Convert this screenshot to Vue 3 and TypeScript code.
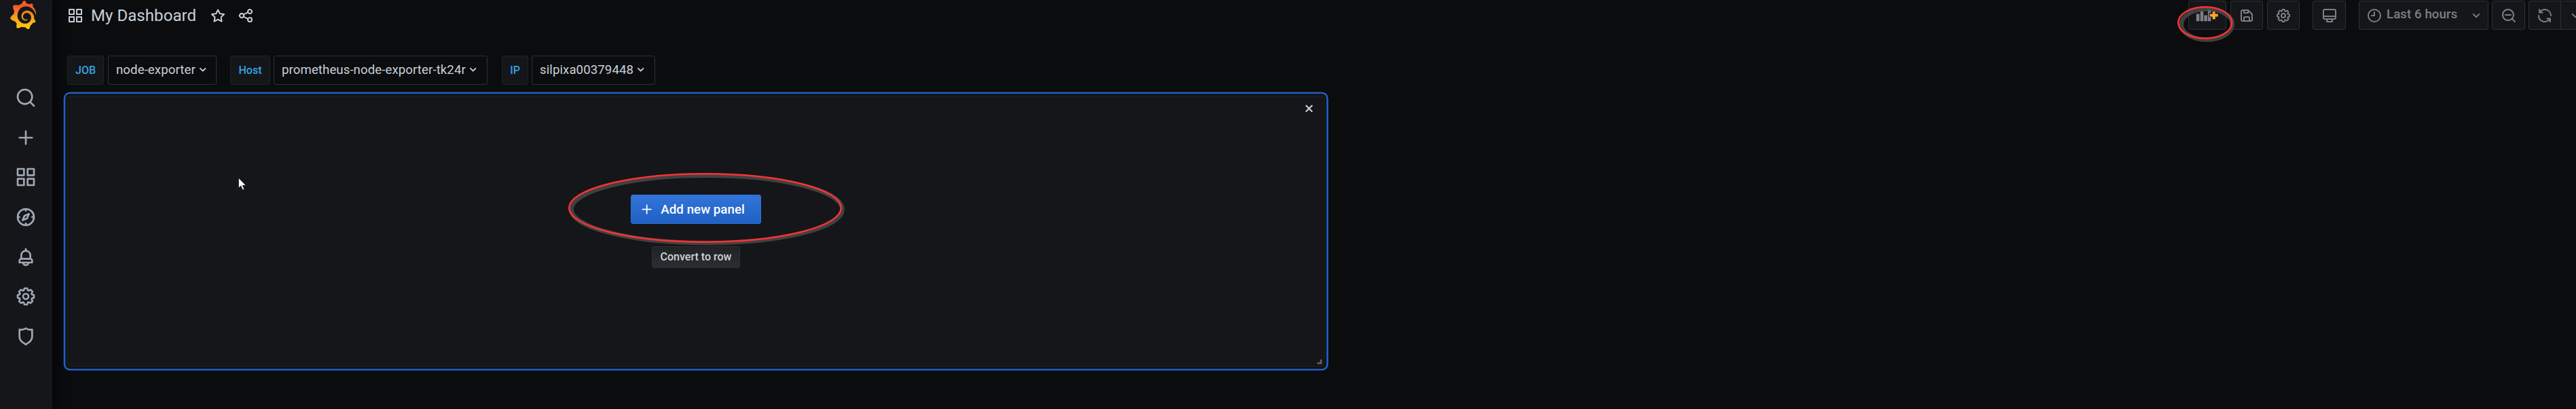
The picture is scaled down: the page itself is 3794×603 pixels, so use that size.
<script setup lang="ts">
import { ref } from 'vue'

interface Variable {
  key: string
  label: string
  value: string
}

const paths: Record<string, string> = {
  apps: 'M10,13H3a1,1,0,0,0-1,1v7a1,1,0,0,0,1,1h7a1,1,0,0,0,1-1V14A1,1,0,0,0,10,13ZM9,20H4V15H9ZM21,2H14a1,1,0,0,0-1,1v7a1,1,0,0,0,1,1h7a1,1,0,0,0,1-1V3A1,1,0,0,0,21,2ZM20,9H15V4h5Zm1,4H14a1,1,0,0,0-1,1v7a1,1,0,0,0,1,1h7a1,1,0,0,0,1-1V14A1,1,0,0,0,21,13Zm-1,7H15V15h5ZM10,2H3A1,1,0,0,0,2,3v7a1,1,0,0,0,1,1h7a1,1,0,0,0,1-1V3A1,1,0,0,0,10,2ZM9,9H4V4H9Z',
  search: 'M21.71,20.29,18,16.61A9,9,0,1,0,16.61,18l3.68,3.68a1,1,0,0,0,1.42,0A1,1,0,0,0,21.71,20.29ZM11,18a7,7,0,1,1,7-7A7,7,0,0,1,11,18Z',
  plus: 'M19,11H13V5a1,1,0,0,0-2,0v6H5a1,1,0,0,0,0,2h6v6a1,1,0,0,0,2,0V13h6a1,1,0,0,0,0-2Z',
  compass: 'M12,2A10,10,0,1,0,22,12,10,10,0,0,0,12,2Zm1,17.93V19a1,1,0,0,0-2,0v.93A8,8,0,0,1,4.07,13H5a1,1,0,0,0,0-2H4.07A8,8,0,0,1,11,4.07V5a1,1,0,0,0,2,0V4.07A8,8,0,0,1,19.93,11H19a1,1,0,0,0,0,2h.93A8,8,0,0,1,13,19.93ZM15.14,7.55l-5,2.12a1,1,0,0,0-.52.52l-2.12,5a1,1,0,0,0,.21,1.1,1,1,0,0,0,.7.29.93.93,0,0,0,.4-.08l5-2.12a1,1,0,0,0,.52-.52l2.12-5a1,1,0,0,0-1.31-1.31Zm-2.49,5.1-2.28,1,1-2.28,2.28-1Z',
  bell: 'M18,13.18V10a6,6,0,0,0-5-5.91V3a1,1,0,0,0-2,0V4.09A6,6,0,0,0,6,10v3.18A3,3,0,0,0,4,16v2a1,1,0,0,0,1,1H8.14a4,4,0,0,0,7.72,0H19a1,1,0,0,0,1-1V16A3,3,0,0,0,18,13.18ZM8,10a4,4,0,0,1,8,0v3H8Zm4,10a2,2,0,0,1-1.72-1h3.44A2,2,0,0,1,12,20Zm6-3H6V16a1,1,0,0,1,1-1H17a1,1,0,0,1,1,1Z',
  cog: 'M21.32,9.55l-1.89-.63.89-1.78A1,1,0,0,0,20.13,6L18,3.87a1,1,0,0,0-1.15-.19l-1.78.89-.63-1.89A1,1,0,0,0,13.5,2h-3a1,1,0,0,0-.95.68L8.92,4.57,7.14,3.68A1,1,0,0,0,6,3.87L3.87,6a1,1,0,0,0-.19,1.15l.89,1.78-1.89.63A1,1,0,0,0,2,10.5v3a1,1,0,0,0,.68.95l1.89.63-.89,1.78A1,1,0,0,0,3.87,18L6,20.13a1,1,0,0,0,1.15.19l1.78-.89.63,1.89a1,1,0,0,0,.95.68h3a1,1,0,0,0,.95-.68l.63-1.89,1.78.89A1,1,0,0,0,18,20.13L20.13,18a1,1,0,0,0,.19-1.15l-.89-1.78,1.89-.63A1,1,0,0,0,22,13.5v-3A1,1,0,0,0,21.32,9.55ZM20,12.78l-1.2.4A2,2,0,0,0,17.64,16l.57,1.14-1.1,1.1L16,17.64a2,2,0,0,0-2.79,1.16l-.4,1.2H11.22l-.4-1.2A2,2,0,0,0,8,17.64l-1.14.57-1.1-1.1L6.36,16A2,2,0,0,0,5.2,13.18L4,12.78V11.22l1.2-.4A2,2,0,0,0,6.36,8L5.79,6.89l1.1-1.1L8,6.36A2,2,0,0,0,10.82,5.2l.4-1.2h1.56l.4,1.2A2,2,0,0,0,16,6.36l1.14-.57,1.1,1.1L17.64,8a2,2,0,0,0,1.16,2.79l1.2.4ZM12,8a4,4,0,1,0,4,4A4,4,0,0,0,12,8Zm0,6a2,2,0,1,1,2-2A2,2,0,0,1,12,14Z',
  shield: 'M19.63,3.65a1,1,0,0,0-.84-.2,8,8,0,0,1-6.22-1.27,1,1,0,0,0-1.14,0A8,8,0,0,1,5.21,3.45a1,1,0,0,0-.84.2A1,1,0,0,0,4,4.43v7.45a9,9,0,0,0,3.77,7.33l3.65,2.6a1,1,0,0,0,1.16,0l3.65-2.6A9,9,0,0,0,20,11.88V4.43A1,1,0,0,0,19.63,3.65ZM18,11.88a7,7,0,0,1-2.93,5.7L12,19.77,8.93,17.58A7,7,0,0,1,6,11.88V5.58a10,10,0,0,0,6-1.39,10,10,0,0,0,6,1.39Z',
  star: 'M22,9.67A1,1,0,0,0,21.14,9l-5.69-.83L12.9,3a1,1,0,0,0-1.8,0L8.55,8.16,2.86,9a1,1,0,0,0-.81.68,1,1,0,0,0,.25,1l4.13,4-1,5.68A1,1,0,0,0,6.9,21.44L12,18.77l5.1,2.67a.93.93,0,0,0,.46.12,1,1,0,0,0,.59-.19,1,1,0,0,0,.4-1l-1-5.68,4.13-4A1,1,0,0,0,22,9.67Zm-6.15,4a1,1,0,0,0-.29.88l.72,4.2-3.76-2a1.06,1.06,0,0,0-.94,0l-3.76,2,.72-4.2a1,1,0,0,0-.29-.88l-3-3,4.21-.61a1,1,0,0,0,.76-.55L12,5.7l1.88,3.82a1,1,0,0,0,.76.55l4.21.61Z',
  share: 'M18,14a4,4,0,0,0-3.08,1.48l-5.1-2.35a3.64,3.64,0,0,0,0-2.26l5.1-2.35A4,4,0,1,0,14,6a4.17,4.17,0,0,0,.07.71L8.79,9.14a4,4,0,1,0,0,5.72l5.28,2.43A4.17,4.17,0,0,0,14,18a4,4,0,1,0,4-4ZM18,4a2,2,0,1,1-2,2A2,2,0,0,1,18,4ZM6,14a2,2,0,1,1,2-2A2,2,0,0,1,6,14Zm12,6a2,2,0,1,1,2-2A2,2,0,0,1,18,20Z',
  angle: 'M17,9.17a1,1,0,0,0-1.41,0L12,12.71,8.46,9.17a1,1,0,0,0-1.41,0,1,1,0,0,0,0,1.42l4.24,4.24a1,1,0,0,0,1.42,0L17,10.59A1,1,0,0,0,17,9.17Z',
  save: 'M20.71,9.29l-6-6a1,1,0,0,0-.32-.21A1.09,1.09,0,0,0,14,3H6A3,3,0,0,0,3,6V18a3,3,0,0,0,3,3H18a3,3,0,0,0,3-3V10A1,1,0,0,0,20.71,9.29ZM9,5h4V7H9Zm6,14H9V16a1,1,0,0,1,1-1h4a1,1,0,0,1,1,1Zm4-1a1,1,0,0,1-1,1H17V16a3,3,0,0,0-3-3H10a3,3,0,0,0-3,3v3H6a1,1,0,0,1-1-1V6A1,1,0,0,1,6,5H7V8A1,1,0,0,0,8,9h6a1,1,0,0,0,1-1V6.41l4,4Z',
  monitor: 'M19,2H5A3,3,0,0,0,2,5V15a3,3,0,0,0,3,3H7.64l-.58,1a2,2,0,0,0,0,2,2,2,0,0,0,1.75,1h6.46A2,2,0,0,0,17,21a2,2,0,0,0,0-2l-.59-1H19a3,3,0,0,0,3-3V5A3,3,0,0,0,19,2ZM8.77,20,10,18H14l1.2,2ZM20,15a1,1,0,0,1-1,1H5a1,1,0,0,1-1-1V14H20Zm0-3H4V5A1,1,0,0,1,5,4H19a1,1,0,0,1,1,1Z',
  clock: 'M12,2A10,10,0,1,0,22,12,10,10,0,0,0,12,2Zm0,18a8,8,0,1,1,8-8A8,8,0,0,1,12,20ZM12,6a1,1,0,0,0-1,1v4H8a1,1,0,0,0,0,2h4a1,1,0,0,0,1-1V7A1,1,0,0,0,12,6Z',
  zoomOut: 'M21.71,20.29,18,16.61A9,9,0,1,0,16.61,18l3.68,3.68a1,1,0,0,0,1.42,0A1,1,0,0,0,21.71,20.29ZM11,18a7,7,0,1,1,7-7A7,7,0,0,1,11,18Zm4-8H7a1,1,0,0,0,0,2h8a1,1,0,0,0,0-2Z',
  sync: 'M19.91,15.51H15.38a1,1,0,0,0,0,2h2.4A8,8,0,0,1,4,12a1,1,0,0,0-2,0,10,10,0,0,0,16.88,7.23V21a1,1,0,0,0,2,0V16.5A1,1,0,0,0,19.91,15.51ZM12,2A10,10,0,0,0,5.12,4.77V3a1,1,0,0,0-2,0V7.5a1,1,0,0,0,1,1h4.5a1,1,0,0,0,0-2H6.22A8,8,0,0,1,20,12a1,1,0,0,0,2,0A10,10,0,0,0,12,2Z',
}

const logoPath =
  'M342,161.2c-0.6-6.1-1.6-13.1-3.6-20.9c-2-7.7-5-16.2-9.4-25c-4.4-8.8-10.1-17.9-17.5-26.8c-2.9-3.5-6.1-6.9-9.5-10.2c5.1-20.3-6.2-37.9-6.2-37.9c-19.5-1.2-31.9,6.1-36.5,9.4c-0.8-0.3-1.5-0.7-2.3-1c-3.3-1.3-6.7-2.6-10.3-3.7c-3.5-1.1-7.1-2.1-10.8-3c-3.7-0.9-7.4-1.6-11.2-2.2c-0.7-0.1-1.3-0.2-2-0.3c-8.5-27.2-32.9-38.6-32.9-38.6c-27.3,17.3-32.4,41.5-32.4,41.5s-0.1,0.5-0.3,1.4c-1.5,0.4-3,0.9-4.5,1.3c-2.1,0.6-4.2,1.4-6.2,2.2c-2.1,0.8-4.1,1.6-6.2,2.5c-4.1,1.8-8.2,3.8-12.2,6c-3.9,2.2-7.7,4.6-11.4,7.1c-0.5-0.2-1-0.4-1-0.4c-37.8-14.4-71.3,2.9-71.3,2.9c-3.1,40.2,15.1,65.5,18.7,70.1c-0.9,2.5-1.7,5-2.5,7.5c-2.8,9.1-4.9,18.4-6.2,28.1c-0.2,1.4-0.4,2.8-0.5,4.2C18.8,192.7,8.5,228,8.5,228c29.1,33.5,63.1,35.6,63.1,35.6c0,0,0.1-0.1,0.1-0.1c4.3,7.7,9.3,15,14.9,21.9c2.4,2.9,4.8,5.6,7.4,8.3c-10.6,30.4,1.5,55.6,1.5,55.6c32.4,1.2,53.7-14.2,58.2-17.7c3.2,1.1,6.5,2.1,9.8,2.9c10,2.6,20.2,4.1,30.4,4.5c2.5,0.1,5.1,0.2,7.6,0.1l1.2,0l0.8,0l1.6,0l1.6-0.1l0,0.1c15.3,21.8,42.1,24.9,42.1,24.9c19.1-20.1,20.2-40.1,20.2-44.4l0,0c0,0,0-0.1,0-0.3c0-0.4,0-0.6,0-0.6l0,0c0-0.3,0-0.6,0-0.9c4-2.8,7.8-5.8,11.4-9.1c7.6-6.9,14.3-14.8,19.9-23.3c0.5-0.8,1-1.6,1.5-2.4c21.6,1.2,36.9-13.4,36.9-13.4c-3.6-22.5-16.4-33.5-19.1-35.6l0,0c0,0-0.1-0.1-0.3-0.2c-0.2-0.1-0.2-0.2-0.2-0.2c0,0,0,0,0,0c-0.1-0.1-0.3-0.2-0.5-0.3c0.1-1.4,0.2-2.7,0.3-4.1c0.2-2.4,0.2-4.9,0.2-7.3l0-1.8l0-0.9l0-0.5c0-0.6,0-0.4,0-0.6l-0.1-1.5l-0.1-2c0-0.7-0.1-1.3-0.2-1.9c-0.1-0.6-0.1-1.3-0.2-1.9l-0.2-1.9l-0.3-1.9c-0.4-2.5-0.8-4.9-1.4-7.4c-2.3-9.7-6.1-18.9-11-27.2c-5-8.3-11.2-15.6-18.3-21.8c-7-6.2-14.9-11.2-23.1-14.9c-8.3-3.7-16.9-6.1-25.5-7.2c-4.3-0.6-8.6-0.8-12.9-0.7l-1.6,0l-0.4,0c-0.1,0-0.6,0-0.5,0l-0.7,0l-1.6,0.1c-0.6,0-1.2,0.1-1.7,0.1c-2.2,0.2-4.4,0.5-6.5,0.9c-8.6,1.6-16.7,4.7-23.8,9c-7.1,4.3-13.3,9.6-18.3,15.6c-5,6-8.9,12.7-11.6,19.6c-2.7,6.9-4.2,14.1-4.6,21c-0.1,1.7-0.1,3.5-0.1,5.2c0,0.4,0,0.9,0,1.3l0.1,1.4c0.1,0.8,0.1,1.7,0.2,2.5c0.3,3.5,1,6.9,1.9,10.1c1.9,6.5,4.9,12.4,8.6,17.4c3.7,5,8.2,9.1,12.9,12.4c4.7,3.2,9.8,5.5,14.8,7c5,1.5,10,2.1,14.7,2.1c0.6,0,1.2,0,1.7,0c0.3,0,0.6,0,0.9,0c0.3,0,0.6,0,0.9-0.1c0.5,0,1-0.1,1.5-0.1c0.1,0,0.3,0,0.4-0.1l0.5-0.1c0.3,0,0.6-0.1,0.9-0.1c0.6-0.1,1.1-0.2,1.7-0.3c0.6-0.1,1.1-0.2,1.6-0.4c1.1-0.2,2.1-0.6,3.1-0.9c2-0.7,4-1.5,5.7-2.4c1.8-0.9,3.4-2,5-3c0.4-0.3,0.9-0.6,1.3-1c1.6-1.3,1.9-3.7,0.6-5.3c-1.1-1.4-3.1-1.8-4.7-0.9c-0.4,0.2-0.8,0.4-1.2,0.6c-1.4,0.7-2.8,1.3-4.3,1.8c-1.5,0.5-3.1,0.9-4.7,1.2c-0.8,0.1-1.6,0.2-2.5,0.3c-0.4,0-0.8,0.1-1.3,0.1c-0.4,0-0.9,0-1.2,0c-0.4,0-0.8,0-1.2,0c-0.5,0-1,0-1.5-0.1c0,0-0.3,0-0.1,0l-0.2,0l-0.3,0c-0.2,0-0.5,0-0.7-0.1c-0.5-0.1-0.9-0.1-1.4-0.2c-3.7-0.5-7.4-1.6-10.9-3.2c-3.6-1.6-7-3.8-10.1-6.6c-3.1-2.8-5.8-6.1-7.9-9.9c-2.1-3.8-3.6-8-4.3-12.4c-0.3-2.2-0.5-4.5-0.4-6.7c0-0.6,0.1-1.2,0.1-1.8c0,0.2,0-0.1,0-0.1l0-0.2l0-0.5c0-0.3,0.1-0.6,0.1-0.9c0.1-1.2,0.3-2.4,0.5-3.6c1.7-9.6,6.5-19,13.9-26.1c1.9-1.8,3.9-3.4,6-4.9c2.1-1.5,4.4-2.8,6.8-3.9c2.4-1.1,4.8-2,7.4-2.7c2.5-0.7,5.1-1.1,7.8-1.4c1.3-0.1,2.6-0.2,4-0.2c0.4,0,0.6,0,0.9,0l1.1,0l0.7,0c0.3,0,0,0,0.1,0l0.3,0l1.1,0.1c2.9,0.2,5.7,0.6,8.5,1.3c5.6,1.2,11.1,3.3,16.2,6.1c10.2,5.7,18.9,14.5,24.2,25.1c2.7,5.3,4.6,11,5.5,16.9c0.2,1.5,0.4,3,0.5,4.5l0.1,1.1l0.1,1.1c0,0.4,0,0.8,0,1.1c0,0.4,0,0.8,0,1.1l0,1l0,1.1c0,0.7-0.1,1.9-0.1,2.6c-0.1,1.6-0.3,3.3-0.5,4.9c-0.2,1.6-0.5,3.2-0.8,4.8c-0.3,1.6-0.7,3.2-1.1,4.7c-0.8,3.1-1.8,6.2-3,9.3c-2.4,6-5.6,11.8-9.4,17.1c-7.7,10.6-18.2,19.2-30.2,24.7c-6,2.7-12.3,4.7-18.8,5.7c-3.2,0.6-6.5,0.9-9.8,1l-0.6,0l-0.5,0l-1.1,0l-1.6,0l-0.8,0c0.4,0-0.1,0-0.1,0l-0.3,0c-1.8,0-3.5-0.1-5.3-0.3c-7-0.5-13.9-1.8-20.7-3.7c-6.7-1.9-13.2-4.6-19.4-7.8c-12.3-6.6-23.4-15.6-32-26.5c-4.3-5.4-8.1-11.3-11.2-17.4c-3.1-6.1-5.6-12.6-7.4-19.1c-1.8-6.6-2.9-13.3-3.4-20.1l-0.1-1.3l0-0.3l0-0.3l0-0.6l0-1.1l0-0.3l0-0.4l0-0.8l0-1.6l0-0.3c0,0,0,0.1,0-0.1l0-0.6c0-0.8,0-1.7,0-2.5c0.1-3.3,0.4-6.8,0.8-10.2c0.4-3.4,1-6.9,1.7-10.3c0.7-3.4,1.5-6.8,2.5-10.2c1.9-6.7,4.3-13.2,7.1-19.3c5.7-12.2,13.1-23.1,22-31.8c2.2-2.2,4.5-4.2,6.9-6.2c2.4-1.9,4.9-3.7,7.5-5.4c2.5-1.7,5.2-3.2,7.9-4.6c1.3-0.7,2.7-1.4,4.1-2c0.7-0.3,1.4-0.6,2.1-0.9c0.7-0.3,1.4-0.6,2.1-0.9c2.8-1.2,5.7-2.2,8.7-3.1c0.7-0.2,1.5-0.4,2.2-0.7c0.7-0.2,1.5-0.4,2.2-0.6c1.5-0.4,3-0.8,4.5-1.1c0.7-0.2,1.5-0.3,2.3-0.5c0.8-0.2,1.5-0.3,2.3-0.5c0.8-0.1,1.5-0.3,2.3-0.4l1.1-0.2l1.2-0.2c0.8-0.1,1.5-0.2,2.3-0.3c0.9-0.1,1.7-0.2,2.6-0.3c0.7-0.1,1.9-0.2,2.6-0.3c0.5-0.1,1.1-0.1,1.6-0.2l1.1-0.1l0.5-0.1l0.6,0c0.9-0.1,1.7-0.1,2.6-0.2l1.3-0.1c0,0,0.5,0,0.1,0l0.3,0l0.6,0c0.7,0,1.5-0.1,2.2-0.1c2.9-0.1,5.9-0.1,8.8,0c5.8,0.2,11.5,0.9,17,1.9c11.1,2.1,21.5,5.6,31,10.3c9.5,4.6,17.9,10.3,25.3,16.5c0.5,0.4,0.9,0.8,1.4,1.2c0.4,0.4,0.9,0.8,1.3,1.2c0.9,0.8,1.7,1.6,2.6,2.4c0.9,0.8,1.7,1.6,2.5,2.4c0.8,0.8,1.6,1.6,2.4,2.5c3.1,3.3,6,6.6,8.6,10c5.2,6.7,9.4,13.5,12.7,19.9c0.2,0.4,0.4,0.8,0.6,1.2c0.2,0.4,0.4,0.8,0.6,1.2c0.4,0.8,0.8,1.6,1.1,2.4c0.4,0.8,0.7,1.5,1.1,2.3c0.3,0.8,0.7,1.5,1,2.3c1.2,3,2.4,5.9,3.3,8.6c1.5,4.4,2.6,8.3,3.5,11.7c0.3,1.4,1.6,2.3,3,2.1c1.5-0.1,2.6-1.3,2.6-2.8C342.6,170.4,342.5,166.1,342,161.2z'

const navItems = ['search', 'plus', 'apps', 'compass', 'bell', 'cog', 'shield']

const variables = ref<Variable[]>([
  { key: 'job', label: 'JOB', value: 'node-exporter' },
  { key: 'host', label: 'Host', value: 'prometheus-node-exporter-tk24r' },
  { key: 'ip', label: 'IP', value: 'silpixa00379448' },
])
</script>

<template>
  <div class="app">
    <nav class="sidebar">
      <svg class="logo" viewBox="8 4 335 358" preserveAspectRatio="none">
        <defs>
          <linearGradient id="logo-fill" x1="0" y1="1" x2="0" y2="0">
            <stop offset="0" stop-color="#fcd00c" />
            <stop offset="0.15" stop-color="#fcc010" />
            <stop offset="0.5" stop-color="#f7901e" />
            <stop offset="0.8" stop-color="#f05a28" />
            <stop offset="1" stop-color="#f05a28" />
          </linearGradient>
        </defs>
        <path :d="logoPath" fill="url(#logo-fill)" />
      </svg>
      <div class="nav">
        <svg v-for="name in navItems" :key="name" class="icon nav-icon" viewBox="0 0 24 24">
          <path :d="paths[name]" />
        </svg>
      </div>
    </nav>

    <main class="main">
      <header class="header">
        <div class="title-group">
          <svg class="icon" viewBox="0 0 24 24"><path :d="paths.apps" /></svg>
          <h1 class="title">My Dashboard</h1>
          <svg class="icon star" viewBox="0 0 24 24"><path :d="paths.star" /></svg>
          <svg class="icon share" viewBox="0 0 24 24"><path :d="paths.share" /></svg>
        </div>

        <div class="toolbar">
          <button class="tool add">
            <svg class="add-icon" viewBox="0 0 34 20">
              <defs>
                <linearGradient id="add-fill" x1="0" y1="0" x2="0" y2="1">
                  <stop offset="0" stop-color="#f5892b" />
                  <stop offset="1" stop-color="#fbc02c" />
                </linearGradient>
              </defs>
              <path class="bars" d="M0.700 7.500h4.700v10.700H0.700zM6.700 3.500h4.500v14.700H6.700zM12.300 9.500h4.500v8.700h-4.500zM17.800 0.800h4.500v5.200h-2.700v6.600h2.700v5.600h-4.500z" />
              <path d="M24.700 3.500h4v4h4v4h-4v3.800h-4v-3.800h-4v-4h4z" fill="url(#add-fill)" />
            </svg>
          </button>
          <button class="tool save"><svg class="icon" viewBox="0 0 24 24"><path :d="paths.save" /></svg></button>
          <button class="tool settings"><svg class="icon" viewBox="0 0 24 24"><path :d="paths.cog" /></svg></button>
          <button class="tool monitor"><svg class="icon" viewBox="0 0 24 24"><path :d="paths.monitor" /></svg></button>
          <button class="tool range">
            <svg class="icon" viewBox="0 0 24 24"><path :d="paths.clock" /></svg>
            <span class="range-text">Last 6 hours</span>
            <svg class="icon" viewBox="0 0 24 24"><path :d="paths.angle" /></svg>
          </button>
          <button class="tool zoom"><svg class="icon" viewBox="0 0 24 24"><path :d="paths.zoomOut" /></svg></button>
          <button class="tool refresh"><svg class="icon" viewBox="0 0 24 24"><path :d="paths.sync" /></svg></button>
          <button class="tool interval"><svg class="icon" viewBox="0 0 24 24"><path :d="paths.angle" /></svg></button>
        </div>
      </header>

      <section class="variables">
        <div v-for="v in variables" :key="v.key" class="variable" :class="v.key">
          <span class="var-label">{{ v.label }}</span>
          <span class="var-value">
            <span>{{ v.value }}</span>
            <svg class="icon small" viewBox="0 0 24 24"><path :d="paths.angle" /></svg>
          </span>
        </div>
      </section>

      <section class="panel">
        <svg class="close" viewBox="0 0 12 12"><path d="M1.200 1.200l9.600 9.600M10.800 1.200l-9.600 9.600" /></svg>
        <button class="add-panel">
          <svg class="icon small" viewBox="0 0 24 24"><path :d="paths.plus" /></svg>
          <span>Add new panel</span>
        </button>
        <button class="convert">Convert to row</button>
        <svg class="resize" viewBox="0 0 7 7"><path d="M4 0h3v7H0V4h4z" /></svg>
      </section>
    </main>

    <svg class="mark mark-panel" viewBox="0 0 420 120">
      <ellipse class="mark-shadow" cx="211" cy="58.500" rx="199.500" ry="49.700" />
      <ellipse class="mark-line" cx="208.500" cy="56.500" rx="200.300" ry="50.200" />
    </svg>
    <svg class="mark mark-tool" viewBox="0 0 100 70">
      <ellipse class="mark-shadow" cx="50.300" cy="35.900" rx="37.500" ry="22.600" />
      <ellipse class="mark-line" cx="47.700" cy="33.400" rx="39.500" ry="23.200" />
    </svg>
    <svg class="pointer" viewBox="0 0 12 19">
      <path d="M0.500 0.500V15l3.300-3.100L6.400 18l2.300-1L6.200 11.200H11z" />
    </svg>
  </div>
</template>

<style>
body {
  background: #0b0c0e;
  overflow: hidden;
}
</style>

<style scoped>
.app {
  position: relative;
  display: flex;
  width: 3794px;
  height: 603px;
  overflow: hidden;
  background: #0b0c0e;
  color: #c7d0d9;
  font-family: Roboto, 'Liberation Sans', sans-serif;
  font-size: 18.667px;
}

.icon {
  display: block;
  flex: none;
  width: 24px;
  height: 24px;
  fill: currentColor;
}

.icon.small {
  width: 21.333px;
  height: 21.333px;
}

.sidebar {
  flex: none;
  width: 77px;
  background: #151619;
  box-shadow: 0 0 26px #000;
}

.logo {
  display: block;
  width: 38px;
  height: 42px;
  margin: 1px 0 0 15px;
}

.nav {
  display: flex;
  flex-direction: column;
  align-items: center;
  gap: 26.667px;
  margin-top: 85px;
  padding-right: 1px;
  color: #9fa7b3;
}

.nav-icon {
  width: 32px;
  height: 32px;
}

.main {
  flex: 1;
  min-width: 0;
  padding-left: 22px;
}

.header {
  display: flex;
  justify-content: space-between;
  height: 82px;
}

.title-group {
  display: flex;
  align-items: center;
  height: 46px;
}

.title {
  width: 175px;
  margin: 0 0 0 11px;
  font-size: 24px;
  font-weight: 400;
  line-height: 32px;
  letter-spacing: 0.06px;
  white-space: nowrap;
}

.share {
  margin-left: 16.500px;
}

.toolbar {
  display: flex;
  align-items: flex-start;
  flex: none;
  width: 571px;
  padding-top: 1px;
  overflow: hidden;
}

.tool {
  display: flex;
  align-items: center;
  justify-content: center;
  flex: none;
  box-sizing: border-box;
  width: 48px;
  height: 43px;
  margin: 0;
  padding: 0;
  border: 1px solid #2c2f33;
  border-radius: 3px;
  background: #151619;
  color: #7b8087;
  font: inherit;
}

.add {
  width: 56px;
  margin-right: 6px;
}

.add-icon {
  width: 34px;
  height: 20px;
  margin-left: 0.600px;
}

.bars {
  fill: #7b8087;
}

.save {
  margin-right: 6px;
}

.settings {
  margin-right: 19px;
}

.monitor {
  width: 49px;
  margin-right: 19px;
}

.range {
  justify-content: flex-start;
  width: 191px;
  margin-right: 5px;
  padding-left: 10px;
}

.range-text {
  width: 119.500px;
  margin: -4px 0 0 6px;
  font-weight: 500;
  letter-spacing: 0.08px;
  text-align: left;
  white-space: nowrap;
}

.zoom {
  width: 49px;
  margin-right: 5px;
}

.refresh {
  border-radius: 3px 0 0 3px;
}

.interval {
  width: 44px;
  margin-left: -1px;
  border-radius: 0;
}

.variables {
  display: flex;
}

.variable {
  display: flex;
  gap: 6px;
  margin-right: 20px;
}

.var-label,
.var-value {
  display: flex;
  align-items: center;
  box-sizing: border-box;
  height: 43px;
  border-radius: 3px;
  white-space: nowrap;
}

.var-label {
  justify-content: center;
  width: 54px;
  border: 1px solid #202226;
  background: #151619;
  color: #33a2e5;
  font-size: 16px;
  font-weight: 500;
}

.var-value {
  width: 160px;
  padding: 0 0 1px 11px;
  border: 1px solid #2c3235;
  letter-spacing: 0.07px;
}

.host {
  gap: 5px;
}

.host .var-label {
  width: 59px;
}

.host .var-value {
  width: 315px;
}

.host {
  margin-right: 21px;
}

.ip {
  gap: 5px;
}

.ip .var-label {
  width: 39px;
}

.ip .var-value {
  width: 182px;
}

.panel {
  display: flex;
  flex-direction: column;
  align-items: center;
  box-sizing: border-box;
  width: 1852px;
  height: 400px;
  margin-top: 16px;
  border: 1px solid #202226;
  border-radius: 4px;
  background: #151619;
  box-shadow: 0 0 0 2.667px #0e1013, 0 0 0 5.333px #1f60c4;
}

.close {
  align-self: flex-end;
  width: 12px;
  height: 12px;
  margin: 12px 16px 0 0;
  fill: none;
  stroke: #c7d0d9;
  stroke-width: 2.200;
}

.add-panel {
  display: flex;
  align-items: center;
  box-sizing: border-box;
  width: 192px;
  height: 43px;
  margin: 121px 0 0;
  padding: 0 0 0 12px;
  border: 1px solid #2f70dc;
  border-radius: 3px;
  background: linear-gradient(#3274d9, #1f60c4);
  color: #fff;
  font: inherit;
  font-weight: 500;
  letter-spacing: 0.07px;
  white-space: nowrap;
}

.add-panel span {
  margin-left: 10px;
}

.convert {
  box-sizing: border-box;
  width: 130px;
  height: 32px;
  margin: 33px 0 0;
  padding: 0 0 1px;
  border: 1px solid #2c3033;
  border-radius: 3px;
  background: linear-gradient(#202226, #2a2e31);
  color: #d0d3d6;
  font: inherit;
  font-size: 16px;
  font-weight: 500;
  white-space: nowrap;
}

.resize {
  align-self: flex-end;
  width: 7px;
  height: 7px;
  margin: auto 3px 3px 0;
  fill: #58595b;
}

.mark {
  position: absolute;
  overflow: visible;
  fill: none;
  pointer-events: none;
}

.mark-panel {
  left: 830px;
  top: 250px;
  width: 420px;
  height: 120px;
}

.mark-tool {
  left: 3200px;
  top: 0;
  width: 100px;
  height: 70px;
}

.mark-shadow {
  stroke: #4c4c4c;
  stroke-opacity: 0.8;
  stroke-width: 6.500;
}

.mark-line {
  stroke: #fb3232;
  stroke-width: 2.500;
}

.pointer {
  position: absolute;
  left: 351px;
  top: 262px;
  width: 12px;
  height: 19px;
  fill: #fff;
  stroke: #0a0a0a;
  stroke-width: 0.600;
}
</style>
